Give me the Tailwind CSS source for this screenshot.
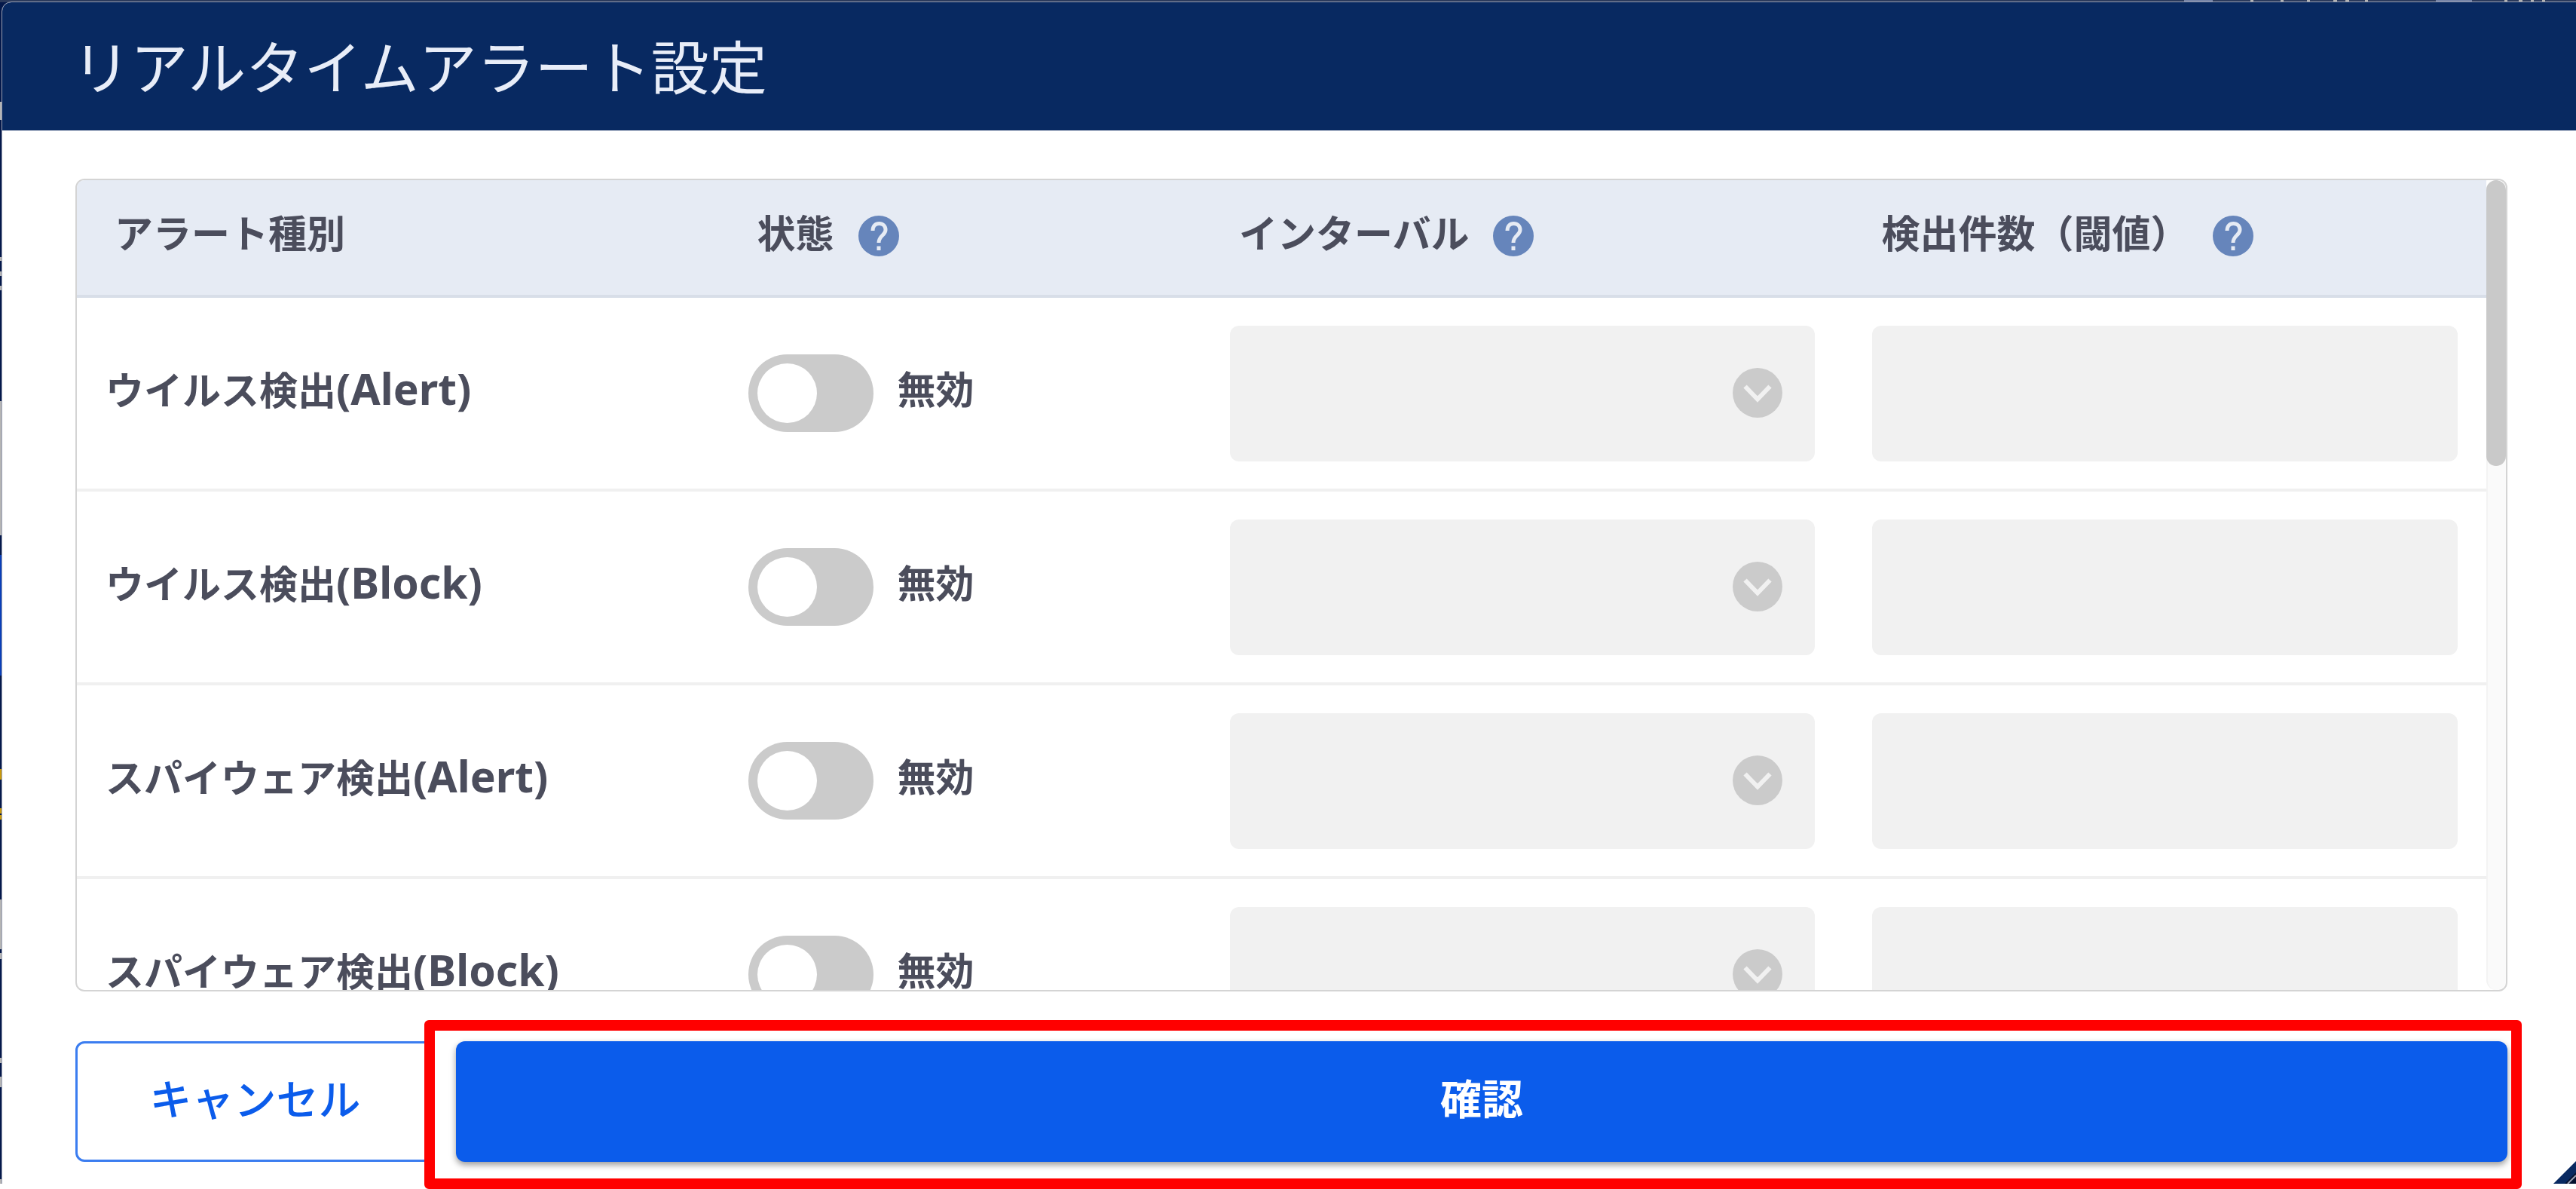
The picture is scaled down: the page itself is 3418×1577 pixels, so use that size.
<!DOCTYPE html>
<html lang="ja">
<head>
    <meta charset="UTF-8">
    <meta name="viewport" content="width=device-width, initial-scale=1.0">
    <script src="https://cdn.jsdelivr.net/npm/@tailwindcss/browser@4"></script>
    <title>リアルタイムアラート設定</title>
</head>
<body class="min-h-screen flex flex-col bg-white font-['Noto_Sans','Noto_Sans_CJK_JP',sans-serif] text-[#4b4d5c]">

<!-- iconos compartidos -->
<svg class="hidden">
    <symbol id="help" viewBox="0 0 54 54">
        <circle cx="27" cy="27" r="27" fill="#6685bb"/>
        <path d="M19 20C19 14 22.500 10.500 27.500 10.500C32.500 10.500 36 14 36 19C36 26 27 26.500 27 36" fill="none" stroke="#e6ebf4" stroke-width="5"/>
        <path d="M24.500 40.500h5v5.500h-5z" fill="#e6ebf4"/>
    </symbol>
    <symbol id="chevron" viewBox="0 0 66 66">
        <circle cx="33" cy="33" r="33" fill="#cbcbcb"/>
        <path d="M16.500 24.500l16.500 17 16.500-17" fill="none" stroke="#f1f1f1" stroke-width="6"/>
    </symbol>
</svg>

<div class="relative grow flex flex-col mb-[7px] pl-[3px] pt-[3px] bg-[#04184a] overflow-hidden">
    <!-- restos de la página de detrás: borde izquierdo, borde superior y esquina -->
    <svg class="absolute left-0 top-0 w-[3px] h-[1570px]">
        <path d="M0 135h3v24h-3zM0 341h3v5h-3zM0 360h3v6h-3zM0 379h3v6h-3zM0 532h3v178h-3zM0 1193h3v66h-3zM0 1264h3v8h-3zM0 1403h3v7h-3zM0 1428h3v14h-3zM0 1564h3v6h-3z" fill="#b4b4b4"/>
        <path d="M0 736h3v160h-3z" fill="#0a3fb8"/>
        <path d="M0 1020h3v14h-3zM0 1072h3v7h-3zM0 1081h3v6h-3z" fill="#c8980a"/>
    </svg>
    <div class="absolute inset-x-0 top-0 h-[3px] bg-[#2b3a5c]"></div>
    <svg class="absolute right-0 top-0 w-[558px] h-[3px]">
        <path d="M38 0h38v3h-38zM372 0h48v3h-48z" fill="#7785a8"/>
        <path d="M126 0h4v3h-4zM166 0h4v3h-4zM201 0h4v3h-4zM236 0h5v3h-5zM252 0h5v3h-5zM278 0h4v3h-4zM463 0h4v3h-4zM482 0h5v3h-5zM498 0h4v3h-4zM513 0h4v3h-4z" fill="#b4b4b4"/>
    </svg>

    <main class="relative grow flex flex-col bg-white rounded-tl-xl overflow-hidden outline-1 outline-[#9aa0b4]">
        <header class="h-[170px] flex items-center shrink-0 px-[93px] pt-1 bg-[#082961]">
            <h1 class="text-[77px] leading-[100px] text-[#e8edf8]">リアルタイムアラート設定</h1>
        </header>

        <div class="flex flex-col gap-[66px] pt-16 pl-[97px] pr-[91px]">
            <div class="h-[1078px] flex border-2 border-[#d4d4d4] rounded-xl overflow-hidden">
                <div class="grow overflow-hidden">
                    <table class="w-full table-fixed text-[51px] leading-[60px] font-bold text-left">
                        <thead>
                            <tr class="h-[154px] bg-[#e6ebf4] border-b-4 border-[#d8dee8]">
                                <th class="w-4/15 pl-[50px] pb-3">アラート種別</th>
                                <th class="w-3/15 pl-[50px] pb-3"><div class="flex items-center gap-8">状態<svg class="size-[54px] mt-2"><use href="#help"/></svg></div></th>
                                <th class="w-4/15 pl-[50px] pb-3"><div class="flex items-center gap-8">インターバル<svg class="size-[54px] mt-2"><use href="#help"/></svg></div></th>
                                <th class="w-4/15 pl-[50px] pb-3"><div class="flex items-center gap-8">検出件数（閾値）<svg class="size-[54px] mt-2"><use href="#help"/></svg></div></th>
                            </tr>
                        </thead>
                        <tbody id="alertas"></tbody>
                    </table>
                </div>
                <div class="w-[26px] shrink-0 bg-[#fafafa] border-l-2 border-[#f3f3f3] rounded-full">
                    <div class="-ml-[2px] h-[379px] rounded-full bg-[#c9c9c9]"></div>
                </div>
            </div>

            <div class="flex gap-7 h-40">
                <button class="w-[477px] pb-2 border-3 border-[#3b7df0] rounded-xl text-[56px] font-medium text-[#0b5ceb]">キャンセル</button>
                <button class="grow pb-2 rounded-xl bg-[#0b5ceb] text-[55px] font-bold text-white shadow-[0_4px_8px_rgba(0,0,0,0.4)]">確認</button>
            </div>
        </div>
    </main>

    <svg class="absolute right-0 bottom-0 size-[30px]" viewBox="0 0 30 30">
        <path d="M0 30L30 0V30z" fill="#082961"/>
        <path d="M15 30L30 15V30z" fill="#04102e"/>
        <path d="M19 30L30 19" stroke="#9aa0b4" stroke-width="2"/>
    </svg>
</div>

<!-- marco rojo sobre el botón de confirmar -->
<div class="absolute left-[563px] right-[72px] top-[1353px] h-56 border-14 border-[#ff0000] rounded-md pointer-events-none"></div>

<script>
    const alertas = [
        ['ウイルス検出', '(Alert)'],
        ['ウイルス検出', '(Block)'],
        ['スパイウェア検出', '(Alert)'],
        ['スパイウェア検出', '(Block)']
    ];

    document.getElementById('alertas').innerHTML = alertas.map(([nombre, tipo], i) => `
        <tr class="h-[257px] border-b-4 border-[#f0f0f0]">
            <th class="pl-[38px] pb-3">${nombre}<span class="text-[57px]">${tipo}</span></th>
            <td class="pl-[38px]">
                <label class="flex items-center gap-8">
                    <input type="checkbox" class="peer sr-only" aria-label="${nombre}${tipo}">
                    <span class="w-[166px] h-[103px] p-3 rounded-full bg-[#cbcbcb]"><span class="block size-[79px] rounded-full bg-white"></span></span>
                    <span class="pb-3">無効</span>
                </label>
            </td>
            <td class="px-[38px]">
                <div class="relative">
                    <select id="intervalo-${i}" aria-label="インターバル" disabled class="block w-full h-[180px] rounded-xl bg-[#f1f1f1] appearance-none opacity-100"></select>
                    <svg class="absolute right-[43px] top-[56px] size-[66px]"><use href="#chevron"/></svg>
                </div>
            </td>
            <td class="px-[38px]">
                <input type="text" id="umbral-${i}" aria-label="検出件数（閾値）" disabled class="block w-full h-[180px] rounded-xl bg-[#f1f1f1]">
            </td>
        </tr>`).join('');
</script>
</body>
</html>
